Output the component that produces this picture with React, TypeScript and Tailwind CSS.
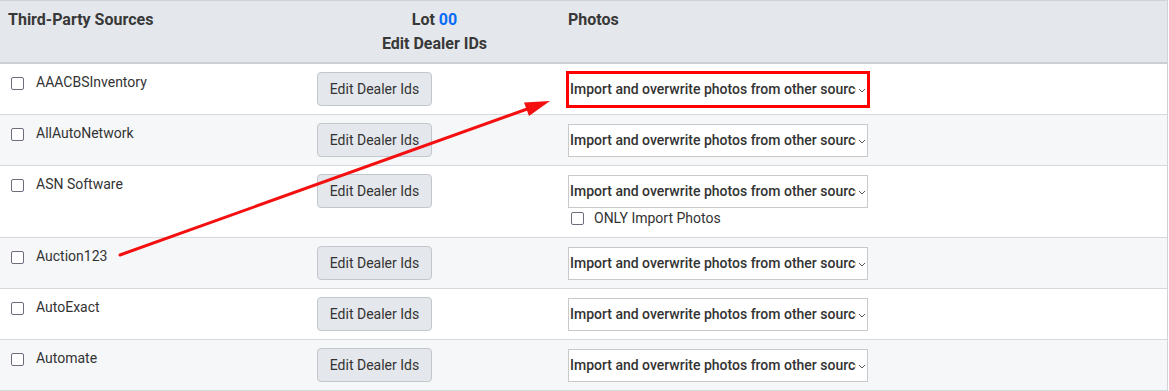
const sources = [
  { name: 'AAACBSInventory', highlight: true },
  { name: 'AllAutoNetwork' },
  { name: 'ASN Software', onlyImport: true },
  { name: 'Auction123' },
  { name: 'AutoExact' },
  { name: 'Automate' },
];

const Checkbox = () => (
  <span className="inline-block w-[13px] h-[13px] shrink-0 rounded-[2px] border border-[#6f6b7a] bg-white" />
);

const PhotoSelect = ({ highlight }: { highlight?: boolean }) => (
  <div className="relative w-[300px]">
    <div className="flex items-center h-[33px] border border-[#c9c9c9] bg-white pl-[1px] pr-[4px] overflow-hidden">
      <span className="w-[286px] shrink-0 overflow-hidden whitespace-nowrap text-[14px] font-medium text-[#333]">
        Import and overwrite photos from other sources
      </span>
      <svg width="8" height="5" viewBox="0 0 8 5" className="shrink-0 ml-[2px] mt-[2px]">
        <path d="M1 1l3 3 3-3" fill="none" stroke="#555" strokeWidth="1" />
      </svg>
    </div>
    {highlight && (
      <div className="absolute -inset-[2px] border-[3px] border-[#ff0000]" />
    )}
  </div>
);

const App = () => {
  return (
    <div className="relative w-[1168px] bg-white font-['Roboto',sans-serif] text-[#333]">
      <div className="border-t border-r border-[#cfd3d8]">
        {/* Header */}
        <div className="grid grid-cols-[309px_251px_1fr] bg-[#e4e7eb] border-b-2 border-[#ccd0d6] font-bold text-[16px] leading-[24px] text-[#383838]">
          <div className="px-2 pt-[7px] pb-[6px]">Third-Party Sources</div>
          <div className="px-2 pt-[7px] pb-[6px] text-center">
            <div>
              Lot <span className="text-[#0a6cf5]">00</span>
            </div>
            <div>Edit Dealer IDs</div>
          </div>
          <div className="px-2 pt-[7px] pb-[6px]">Photos</div>
        </div>

        {/* Rows */}
        {sources.map((s, i) => (
          <div
            key={s.name}
            className={`grid grid-cols-[309px_251px_1fr] border-b border-[#d6d8db] ${
              i % 2 === 1 ? 'bg-[#f6f7f9]' : 'bg-white'
            }`}
          >
            <div className="flex items-start gap-[12px] pl-[11px] pt-[8px] text-[14px] leading-[20px]">
              <span className="mt-[3px]">
                <Checkbox />
              </span>
              <span>{s.name}</span>
            </div>
            <div className="px-2 py-2">
              <button className="h-[34px] w-[115px] rounded-[4px] border border-[#c3c7cc] bg-[#e4e7eb] text-[14px] text-[#333]">
                Edit Dealer Ids
              </button>
            </div>
            <div className="pl-2 pt-[9px] pb-2">
              <PhotoSelect highlight={s.highlight} />
              {s.onlyImport && (
                <div className="flex items-center gap-[10px] pl-[3px] pt-[1px] pb-[2px] text-[14px] leading-[18px]">
                  <Checkbox />
                  <span>ONLY Import Photos</span>
                </div>
              )}
            </div>
          </div>
        ))}
      </div>

      {/* Annotation arrow */}
      <svg
        className="absolute left-0 top-0 pointer-events-none"
        width="1168"
        height="391"
        viewBox="0 0 1168 391"
      >
        <line x1="120" y1="255" x2="530" y2="108" stroke="#f41010" strokeWidth="3" strokeLinecap="round" />
        <polygon points="550,101 529,116 524,102.5" fill="#f41010" />
      </svg>
    </div>
  );
};

export default App;
